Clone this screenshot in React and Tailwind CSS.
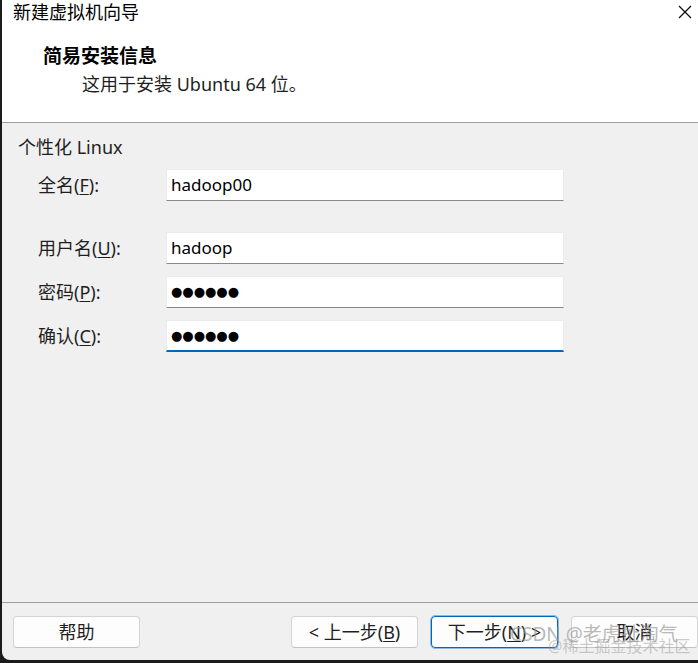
import React from 'react';

const font = { fontFamily: '"Noto Sans", "Noto Sans CJK SC", sans-serif' };

const Field = ({ label, mnemonic, value, password, focused, className }) => (
    <div className={`flex items-center ${className}`}>
        <div className="w-[164px] shrink-0 pl-[36px] text-[18px] text-[#1f1f1f] leading-6">
            {label}(<span className="underline underline-offset-2">{mnemonic}</span>):
        </div>
        <div
            className={`w-[398px] h-[32px] bg-white border border-[#ececec] flex items-center pl-[4px] ${
                focused ? 'border-b-2 border-b-[#0067c0]' : 'border-b-[#8a8a8a]'
            }`}
        >
            {password ? (
                <span className="text-[13px] text-black" style={{ fontFamily: '"DejaVu Sans", sans-serif' }}>
                    ●●●●●●
                </span>
            ) : (
                <span className="text-[17px] text-black">{value}</span>
            )}
        </div>
    </div>
);

const Button = ({ children, primary }) => (
    <button
        className={`w-[127px] h-[32px] rounded-[4px] bg-[#fdfdfd] text-[18px] text-[#1f1f1f] flex items-center justify-center ${
            primary ? 'border border-[#0067c0] outline outline-1 outline-[#0067c0]/40' : 'border border-[#d4d4d4] border-b-[#c2c2c2]'
        }`}
    >
        {children}
    </button>
);

export default function App() {
    return (
        <div className="w-[698px] h-[663px] bg-[#1b1b1b] pl-[2px] pb-[3px] overflow-hidden" style={font}>
            <div className="relative h-full bg-[#f0f0f0] rounded-bl-[8px] flex flex-col overflow-hidden">
                {/* header */}
                <div className="h-[122px] bg-white border-b border-[#a0a0a0] box-content">
                    <div className="flex items-center justify-between h-[24px]">
                        <span className="pl-[11px] text-[18px] text-black">新建虚拟机向导</span>
                        <svg width="14" height="14" viewBox="0 0 14 14" className="mr-[6px]">
                            <path d="M1 1L13 13M13 1L1 13" stroke="#111" strokeWidth="1.3" />
                        </svg>
                    </div>
                    <div className="pl-[41px] mt-[20px] text-[19px] font-bold text-black leading-6">简易安装信息</div>
                    <div className="pl-[80px] mt-[4px] text-[18px] text-[#1f1f1f] leading-6">这用于安装 Ubuntu 64 位。</div>
                </div>

                {/* body */}
                <div className="flex-1">
                    <div className="pl-[16px] mt-[12px] text-[18px] text-[#1f1f1f] leading-6">个性化 Linux</div>
                    <Field className="mt-[10px]" label="全名" mnemonic="F" value="hadoop00" />
                    <Field className="mt-[31px]" label="用户名" mnemonic="U" value="hadoop" />
                    <Field className="mt-[12px]" label="密码" mnemonic="P" password />
                    <Field className="mt-[12px]" label="确认" mnemonic="C" password focused />
                </div>

                {/* footer */}
                <div className="h-[58px] border-t border-[#a0a0a0] flex items-start pt-[13px] pl-[11px]">
                    <Button>帮助</Button>
                    <div className="ml-[151px] flex gap-[13px]">
                        <Button>
                            &lt; 上一步(<span className="underline underline-offset-2">B</span>)
                        </Button>
                        <Button primary>
                            下一步(<span className="underline underline-offset-2">N</span>) &gt;
                        </Button>
                        <Button>取消</Button>
                    </div>
                </div>

                {/* watermark */}
                <div className="absolute left-[508px] top-[622px] text-[19px] text-[#9a9a9a]/70 leading-6 whitespace-nowrap pointer-events-none">
                    CSDN @老虎扯淘气
                </div>
                <div className="absolute left-[546px] top-[636px] text-[16px] text-[#9a9a9a]/50 leading-5 whitespace-nowrap pointer-events-none">
                    @稀土掘金技术社区
                </div>
            </div>
        </div>
    );
}
